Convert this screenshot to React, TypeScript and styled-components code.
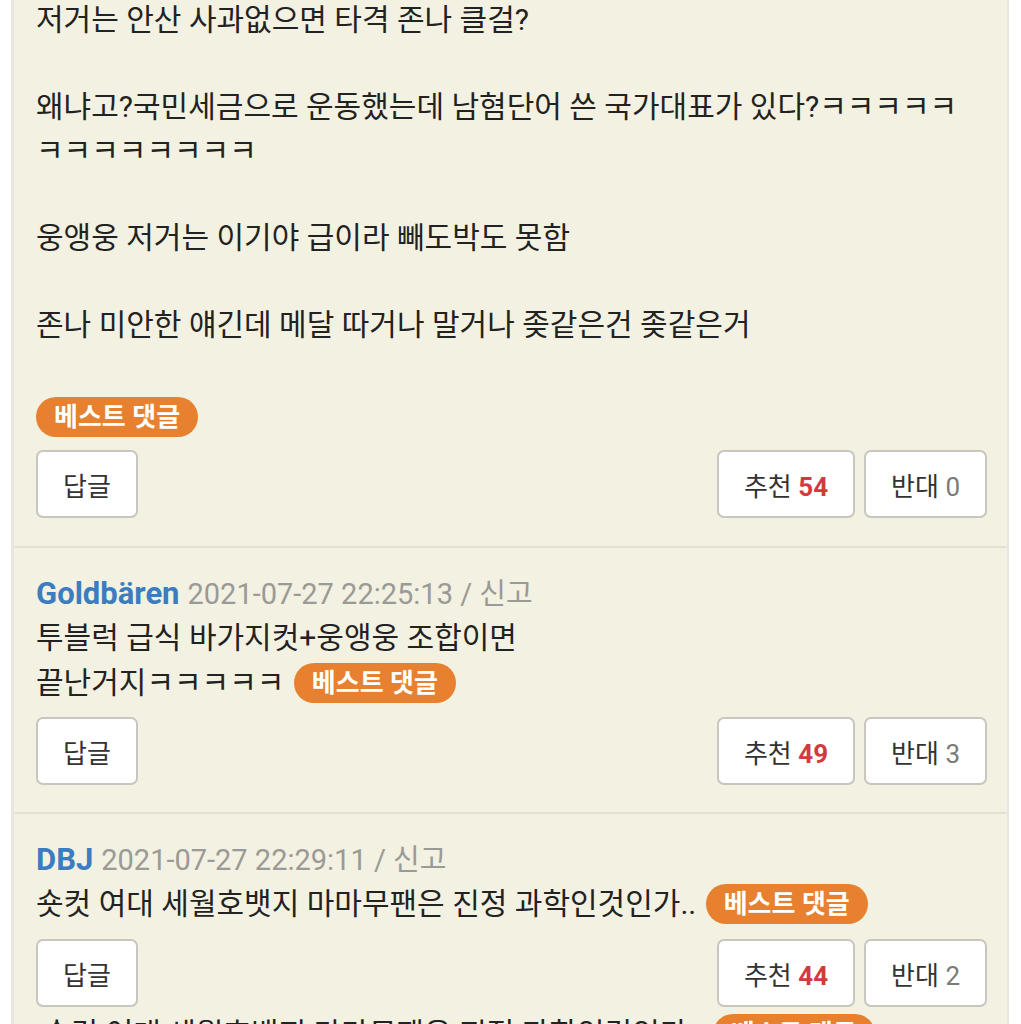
import React from "react";
import styled, { createGlobalStyle } from "styled-components";

const Global = createGlobalStyle`
  html, body { margin: 0; padding: 0; background: #ffffff; }
  body {
    font-family: Roboto, "Noto Sans CJK KR", sans-serif;
    color: #222222;
    -webkit-font-smoothing: antialiased;
  }
`;

const Panel = styled.div`
  margin-left: 11px;
  width: 998px;
  height: 1024px;
  box-sizing: border-box;
  overflow: hidden;
  background: #f3f1e1;
  border-left: 3px solid #e7e6df;
  border-right: 2px solid #e7e6df;
`;

const Comment = styled.section<{ $last?: boolean; $top?: number; $bottom?: number }>`
  padding: ${(p) => p.$top ?? 24}px 20px ${(p) => p.$bottom ?? 27}px 22px;
  border-bottom: ${(p) => (p.$last ? "none" : "2px solid #e3e1d4")};
`;

const Body = styled.div<{ $lh?: number; $shift?: number; $indent?: number }>`
  font-size: 30px;
  line-height: ${(p) => p.$lh ?? 45}px;
  color: #222222;
  margin-top: ${(p) => p.$shift ?? 0}px;
  padding-left: ${(p) => p.$indent ?? 0}px;
  white-space: nowrap;
`;

const Header = styled.div`
  display: flex;
  align-items: baseline;
  gap: 8px;
  height: 43px;
  line-height: 43px;
  white-space: nowrap;
`;

const Name = styled.span`
  color: #3b7dc0;
  font-weight: 700;
  font-size: 31px;
`;

const Meta = styled.span`
  color: #9a9a96;
  font-size: 29px;
`;

const Badge = styled.span<{ $inline?: boolean }>`
  display: inline-flex;
  align-items: center;
  height: 40px;
  padding: 0 18px;
  border-radius: 20px;
  background: #e8812f;
  color: #ffffff;
  font-size: 26px;
  font-weight: 700;
  line-height: 1;
  vertical-align: middle;
  margin-left: ${(p) => (p.$inline ? "2px" : "0")};
  position: relative;
  top: ${(p) => (p.$inline ? "-2px" : "0")};
`;

const BadgeRow = styled.div<{ $gap: number }>`
  margin-top: ${(p) => p.$gap}px;
  display: flex;
`;

const Actions = styled.div<{ $gap?: number }>`
  display: flex;
  align-items: center;
  gap: 9px;
  margin-top: ${(p) => p.$gap ?? 13}px;
`;

const Spacer = styled.div`
  flex: 1;
`;

const Btn = styled.button`
  height: 68px;
  padding: 0 25px;
  box-sizing: border-box;
  background: #ffffff;
  border: 2px solid #c8c6be;
  border-radius: 7px;
  font-family: Roboto, "Noto Sans CJK KR", sans-serif;
  font-size: 26px;
  color: #333333;
  white-space: nowrap;
  cursor: pointer;
`;

const Up = styled.b`
  color: #d23b3d;
  font-weight: 700;
`;

const Down = styled.span`
  color: #7a7a78;
`;

type Vote = { up: number; down: number };

const ActionBar = ({ up, down, gap }: Vote & { gap?: number }) => (
  <Actions $gap={gap}>
    <Btn>답글</Btn>
    <Spacer />
    <Btn>
      추천 <Up>{up}</Up>
    </Btn>
    <Btn>
      반대 <Down>{down}</Down>
    </Btn>
  </Actions>
);

export default function App() {
  return (
    <>
      <Global />
      <Panel>
        <Comment $top={0} $bottom={28}>
          <Body $lh={43.5} $shift={-2}>
            저거는 안산 사과없으면 타격 존나 클걸?
            <br />
            <br />
            왜냐고?국민세금으로 운동했는데 남혐단어 쓴 국가대표가 있다?ㅋㅋㅋㅋㅋ
            <br />
            ㅋㅋㅋㅋㅋㅋㅋㅋ
            <br />
            <br />
            웅앵웅 저거는 이기야 급이라 빼도박도 못함
            <br />
            <br />
            존나 미안한 얘긴데 메달 따거나 말거나 좆같은건 좆같은거
          </Body>
          <BadgeRow $gap={51}>
            <Badge>베스트 댓글</Badge>
          </BadgeRow>
          <ActionBar up={54} down={0} />
        </Comment>

        <Comment>
          <Header>
            <Name>Goldbären</Name>
            <Meta>2021-07-27 22:25:13 / 신고</Meta>
          </Header>
          <Body>
            투블럭 급식 바가지컷+웅앵웅 조합이면
            <br />
            끝난거지ㅋㅋㅋㅋㅋ <Badge $inline>베스트 댓글</Badge>
          </Body>
          <ActionBar up={49} down={3} gap={12} />
        </Comment>

        <Comment $last $bottom={0}>
          <Header>
            <Name>DBJ</Name>
            <Meta>2021-07-27 22:29:11 / 신고</Meta>
          </Header>
          <Body>
            숏컷 여대 세월호뱃지 마마무팬은 진정 과학인것인가.. <Badge $inline>베스트 댓글</Badge>
          </Body>
          <ActionBar up={44} down={2} gap={13} />
          <Body $indent={7} $shift={4}>
            숏컷 여대 세월호뱃지 마마무팬은 진정 과학인것인가.. <Badge $inline>베스트 댓글</Badge>
          </Body>
        </Comment>
      </Panel>
    </>
  );
}
